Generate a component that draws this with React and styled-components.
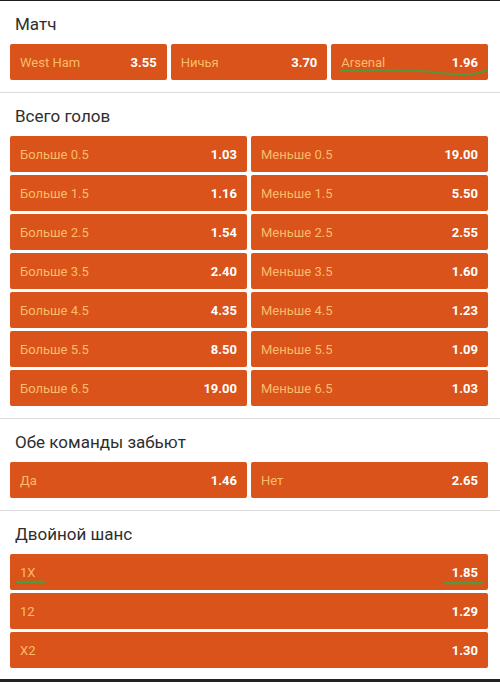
import React from "react";
import styled, { createGlobalStyle } from "styled-components";

const GlobalStyle = createGlobalStyle`
  html, body {
    margin: 0;
    padding: 0;
    background: #fff;
  }
  body {
    font-family: Roboto, "Liberation Sans", Arial, sans-serif;
  }
`;

const Page = styled.div`
  width: 500px;
  height: 682px;
  box-sizing: border-box;
  border-top: 1px solid #1e1e1e;
  overflow: hidden;
  position: relative;
  &::after {
    content: "";
    position: absolute;
    left: 0;
    right: 0;
    top: 678px;
    height: 4px;
    background: #222;
  }
`;

const Section = styled.section`
  padding: 0 12px 12px 10px;
  border-bottom: 1px solid #dcdcdc;
  &:last-child {
    border-bottom: none;
  }
`;

const Title = styled.div`
  height: 43px;
  box-sizing: border-box;
  padding-top: 13px;
  font-size: 17px;
  line-height: 20px;
  color: #2e2e2e;
  padding-left: 5px;
`;

const Grid = styled.div`
  display: grid;
  grid-template-columns: repeat(${p => p.cols}, 1fr);
  column-gap: 4px;
  row-gap: 3px;
`;

const Bet = styled.div`
  position: relative;
  height: 36px;
  border-radius: 2px;
  background: #d9531a;
  display: flex;
  align-items: center;
  justify-content: space-between;
  padding: 0 10px 0 10px;
  font-size: 13px;
`;

const Label = styled.span`
  color: #f9bd68;
`;

const Odds = styled.span`
  color: #fff;
  font-weight: 700;
`;

const Scribble = styled.svg`
  position: absolute;
  pointer-events: none;
  overflow: visible;
`;

const match = [
  ["West Ham", "3.55"],
  ["Ничья", "3.70"],
  ["Arsenal", "1.96"]
];

const totals = [
  ["0.5", "1.03", "19.00"],
  ["1.5", "1.16", "5.50"],
  ["2.5", "1.54", "2.55"],
  ["3.5", "2.40", "1.60"],
  ["4.5", "4.35", "1.23"],
  ["5.5", "8.50", "1.09"],
  ["6.5", "19.00", "1.03"]
];

const double = [
  ["1X", "1.85"],
  ["12", "1.29"],
  ["X2", "1.30"]
];

const App = () => {
  return (
    <Page>
      <GlobalStyle />
      <Section>
        <Title>Матч</Title>
        <Grid cols={3}>
          {match.map(([name, odd], i) => (
            <Bet key={name}>
              <Label>{name}</Label>
              <Odds>{odd}</Odds>
              {i === 2 && (
                <Scribble
                  width="150"
                  height="10"
                  style={{ left: 8, top: 24 }}
                  viewBox="0 0 150 10"
                >
                  <path
                    d="M2 3 C30 2 55 2 80 3 C100 4 110 7 130 6 C138 6 142 5 148 2"
                    fill="none"
                    stroke="#4f9a3c"
                    strokeWidth="2"
                    strokeLinecap="round"
                  />
                </Scribble>
              )}
            </Bet>
          ))}
        </Grid>
      </Section>
      <Section>
        <Title>Всего голов</Title>
        <Grid cols={2}>
          {totals.map(([line, over, under]) => (
            <React.Fragment key={line}>
              <Bet>
                <Label>Больше {line}</Label>
                <Odds>{over}</Odds>
              </Bet>
              <Bet>
                <Label>Меньше {line}</Label>
                <Odds>{under}</Odds>
              </Bet>
            </React.Fragment>
          ))}
        </Grid>
      </Section>
      <Section>
        <Title>Обе команды забьют</Title>
        <Grid cols={2}>
          <Bet>
            <Label>Да</Label>
            <Odds>1.46</Odds>
          </Bet>
          <Bet>
            <Label>Нет</Label>
            <Odds>2.65</Odds>
          </Bet>
        </Grid>
      </Section>
      <Section>
        <Title>Двойной шанс</Title>
        <Grid cols={1}>
          {double.map(([name, odd], i) => (
            <Bet key={name}>
              <Label>{name}</Label>
              <Odds>{odd}</Odds>
              {i === 0 && (
                <>
                  <Scribble
                    width="30"
                    height="4"
                    style={{ left: 6, top: 26 }}
                    viewBox="0 0 30 4"
                  >
                    <path d="M1 2 L28 2" stroke="#4f9a3c" strokeWidth="2.5" strokeLinecap="round" />
                  </Scribble>
                  <Scribble
                    width="40"
                    height="4"
                    style={{ right: 4, top: 27 }}
                    viewBox="0 0 40 4"
                  >
                    <path d="M1 2 L38 2" stroke="#4f9a3c" strokeWidth="2.5" strokeLinecap="round" />
                  </Scribble>
                </>
              )}
            </Bet>
          ))}
        </Grid>
      </Section>
    </Page>
  );
};

export default App;
